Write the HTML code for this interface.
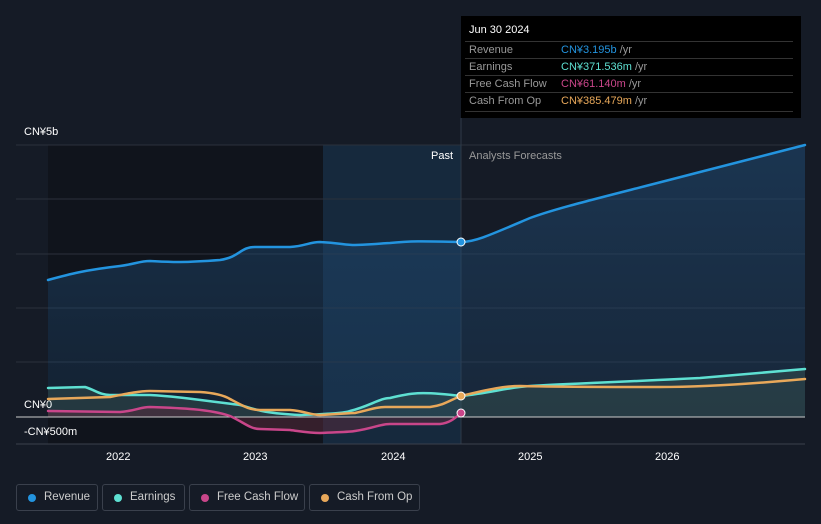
<!DOCTYPE html>
<html><head><style>
body{margin:0;width:821px;height:524px;background:#151b26;font-family:"Liberation Sans",sans-serif;overflow:hidden;position:relative}
.t{position:absolute;font-size:11px;color:#fff}
.tip{position:absolute;left:461px;top:16px;width:340px;height:102px;background:#000;}
.tip .h{position:absolute;left:8px;top:8px;font-size:11px;color:#fff}
.row{position:absolute;left:4px;width:328px;border-top:1px solid #333;height:17px;font-size:11px;color:#999}
.row span{position:absolute;left:96px;top:2px}
.row b{font-weight:normal;position:absolute;left:4px;top:2px}
.lg{position:absolute;top:484px;height:27px;border:1px solid #3a404c;border-radius:3px;font-size:11.5px;color:#ccc;box-sizing:border-box}
.lg i{position:absolute;left:11px;top:9px;width:8px;height:8px;border-radius:50%}
.lg span{position:absolute;left:27px;top:6px}
</style></head><body>
<svg width="821" height="524" style="position:absolute;left:0;top:0">
<defs><linearGradient id="rg" x1="0" y1="0" x2="0" y2="1"><stop offset="0" stop-color="#1f4a73" stop-opacity=".55"/><stop offset="1" stop-color="#1f4a73" stop-opacity=".25"/></linearGradient></defs>
<rect x="48" y="145" width="275" height="299" fill="#10141c"/>
<rect x="323" y="145" width="138" height="299" fill="#16293d"/>
<line x1="16" y1="145" x2="805" y2="145" stroke="#2b313c"/>
<line x1="16" y1="199" x2="805" y2="199" stroke="#2b313c"/>
<line x1="16" y1="254" x2="805" y2="254" stroke="#2b313c"/>
<line x1="16" y1="308" x2="805" y2="308" stroke="#2b313c"/>
<line x1="16" y1="362" x2="805" y2="362" stroke="#2b313c"/>
<line x1="461" y1="118" x2="461" y2="444" stroke="#2e3a48"/>
<path d="M48 280 C70 274,85 270,120 266 C135 264,140 261,150 261 C170 262,180 263,220 260 C240 257,240 247,255 247 L290 247 C305 246,310 242,320 242 C340 243,345 245,355 245 C380 244,385 243,390 243 C410 241,420 241,461 242 C475 242,490 235,530 218 C560 207,600 198,700 172 L805 145 L805 417 L48 417Z" fill="url(#rg)"/>
<path d="M48 388 L85 387 C95 390,100 395,110 395 L150 395 C170 396,185 398,240 405 C255 409,260 413,300 415 C330 414,345 413,350 411 C370 406,380 398,390 398 C410 393,420 391,461 396 C490 393,510 387,530 386 C560 384,600 383,700 378 L805 369 L805 417 L48 417Z" fill="#3d5a55" opacity=".4"/>
<path d="M48 411 L120 412 C135 411,140 407,150 407 C180 408,210 409,230 416 C245 423,250 429,260 429 L290 430 C305 432,310 433,320 433 C340 432,350 432,355 431 C375 428,380 424,390 424 L440 424 C450 423,455 418,461 413 L461 417 L48 417Z" fill="#5a2a3c" opacity=".5"/>
<line x1="16" y1="417" x2="805" y2="417" stroke="#ccc" stroke-width="1"/>
<line x1="16" y1="444" x2="805" y2="444" stroke="#3a404c"/>
<g fill="none" stroke-width="2.5" stroke-linecap="round">
<path d="M48 280 C70 274,85 270,120 266 C135 264,140 261,150 261 C170 262,180 263,220 260 C240 257,240 247,255 247 L290 247 C305 246,310 242,320 242 C340 243,345 245,355 245 C380 244,385 243,390 243 C410 241,420 241,461 242 C475 242,490 235,530 218 C560 207,600 198,700 172 L805 145" stroke="#2394df"/>
<path d="M48 388 L85 387 C95 390,100 395,110 395 L150 395 C170 396,185 398,240 405 C255 409,260 413,300 415 C330 414,345 413,350 411 C370 406,380 398,390 398 C410 393,420 391,461 396 C490 393,510 387,530 386 C560 384,600 383,700 378 L805 369" stroke="#5ee0d2"/>
<path d="M48 411 L120 412 C135 411,140 407,150 407 C180 408,210 409,230 416 C245 423,250 429,260 429 L290 430 C305 432,310 433,320 433 C340 432,350 432,355 431 C375 428,380 424,390 424 L440 424 C450 423,455 418,461 413" stroke="#c9468a"/>
<path d="M48 399 L110 397 C130 393,140 391,150 391 L200 392 C215 393,225 396,230 399 C245 407,250 410,260 410 L290 410 C305 411,310 415,320 415 C340 414,350 413,355 413 C370 410,375 407,385 407 L430 407 C445 405,450 400,461 396 C490 389,505 386,520 386 C560 387,600 387,660 387 C700 387,750 384,805 379" stroke="#e8a85a"/>
</g>
<circle cx="461" cy="242" r="4" fill="#2394df" stroke="#fff" stroke-width="1"/>
<circle cx="461" cy="396" r="4" fill="#e8a85a" stroke="#fff" stroke-width="1"/>
<circle cx="461" cy="413" r="4" fill="#c9468a" stroke="#fff" stroke-width="1"/>
</svg>
<div class="t" style="left:24px;top:126px">CN¥5b</div>
<div class="t" style="left:24px;top:399px">CN¥0</div>
<div class="t" style="left:24px;top:426px">-CN¥500m</div>
<div class="t" style="left:431px;top:150px">Past</div>
<div class="t" style="left:469px;top:150px;color:#999">Analysts Forecasts</div>
<div class="t" style="left:106px;top:451px">2022</div>
<div class="t" style="left:243px;top:451px">2023</div>
<div class="t" style="left:381px;top:451px">2024</div>
<div class="t" style="left:518px;top:451px">2025</div>
<div class="t" style="left:655px;top:451px">2026</div>
<div class="tip"><div class="h">Jun 30 2024</div>
<div class="row" style="top:25px"><b>Revenue</b><span style="color:#2394df">CN¥3.195b <em style="font-style:normal;color:#999">/yr</em></span></div>
<div class="row" style="top:42px"><b>Earnings</b><span style="color:#5ee0d2">CN¥371.536m <em style="font-style:normal;color:#999">/yr</em></span></div>
<div class="row" style="top:59px"><b>Free Cash Flow</b><span style="color:#c9468a">CN¥61.140m <em style="font-style:normal;color:#999">/yr</em></span></div>
<div class="row" style="top:76px;height:18px;border-bottom:1px solid #333"><b>Cash From Op</b><span style="color:#e8a85a">CN¥385.479m <em style="font-style:normal;color:#999">/yr</em></span></div>
</div>
<div class="lg" style="left:16px;width:82px"><i style="background:#2394df"></i><span>Revenue</span></div>
<div class="lg" style="left:102px;width:83px"><i style="background:#5ee0d2"></i><span>Earnings</span></div>
<div class="lg" style="left:189px;width:116px"><i style="background:#c9468a"></i><span>Free Cash Flow</span></div>
<div class="lg" style="left:309px;width:111px"><i style="background:#e8a85a"></i><span>Cash From Op</span></div>
</body></html>
